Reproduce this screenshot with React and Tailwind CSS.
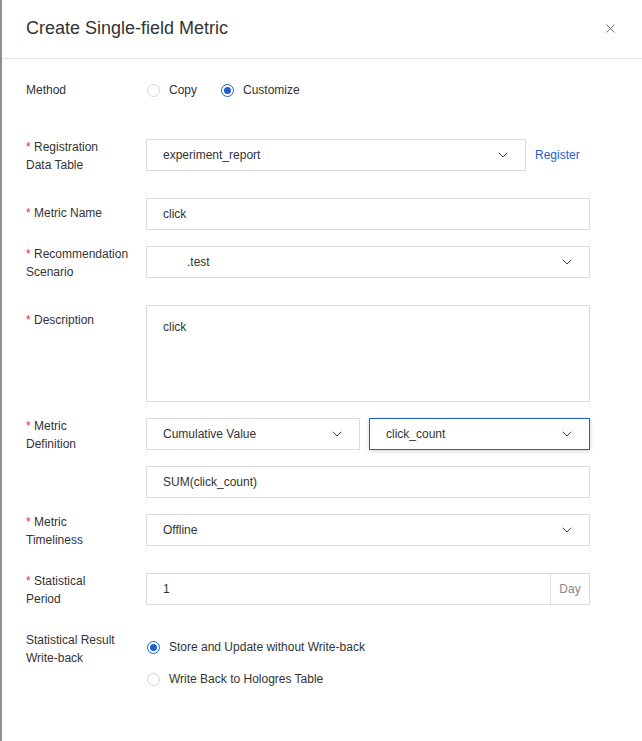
import React from 'react';
import { ChevronDown, X } from 'lucide-react';

const font = { fontFamily: '"Liberation Sans", Arial, sans-serif' };

const Label = ({ text, required, two }) => (
  <div className="w-[120px] shrink-0">
    <div className={`w-[91px] text-[12px] leading-[18px] text-[#333] pb-2 ${two ? '-mt-px' : 'pt-[6px]'}`}>
      {required && <span className="text-[#e62e2e]">*{'\u00a0'}</span>}
      {text}
    </div>
  </div>
);

const Select = ({ value, className = '', active }) => (
  <div
    className={`h-[32px] flex items-center justify-between pl-4 pr-[14px] bg-white text-[12px] text-[#333] border ${
      active ? 'border-[#1f5fd0] shadow-[0_1px_4px_rgba(0,0,0,0.18)]' : 'border-[#dcdcdc]'
    } ${className}`}
  >
    <span>{value}</span>
    <ChevronDown size={16} strokeWidth={1.4} className="text-[#333]" />
  </div>
);

const Input = ({ value, className = '' }) => (
  <div className={`h-[32px] flex items-center pl-4 bg-white text-[12px] text-[#333] border border-[#dcdcdc] ${className}`}>
    {value}
  </div>
);

const Radio = ({ checked, label }) => (
  <div className="flex items-center gap-[9px] text-[12px] text-[#333]">
    <span
      className={`w-[13px] h-[13px] rounded-full border flex items-center justify-center ${
        checked ? 'border-[#1f5fd0]' : 'border-[#d4d4d4]'
      }`}
    >
      {checked && <span className="w-[7px] h-[7px] rounded-full bg-[#1f5fd0]" />}
    </span>
    {label}
  </div>
);

const Row = ({ label, required, two, children, className = 'mb-4' }) => (
  <div className={`flex items-start ${className}`}>
    <Label text={label} required={required} two={two} />
    <div className="w-[444px]">{children}</div>
  </div>
);

export default function App() {
  return (
    <div className="w-[642px] h-[741px] bg-white flex" style={font}>
      <div className="w-[2px] bg-[#8f8f8f] shrink-0" />
      <div className="flex-1 flex flex-col">
        <div className="h-[59px] border-b border-[#e3e3e3] flex items-center justify-between pl-6 pr-6">
          <h1 className="text-[18px] text-[#333] -mt-[1px]">Create Single-field Metric</h1>
          <X size={15} strokeWidth={1.3} className="text-[#555] -mt-[2px]" />
        </div>

        <div className="pl-6 pt-[15px]">
          <div className="flex items-center h-[32px] mb-[33px]">
            <div className="w-[120px] text-[12px] text-[#333]">Method</div>
            <div className="flex items-center gap-[24px] pl-px">
              <Radio label="Copy" />
              <Radio checked label="Customize" />
            </div>
          </div>

          <Row label="Registration Data Table" required two>
            <div className="flex items-center gap-[9px]">
              <Select value="experiment_report" className="w-[380px]" />
              <span className="text-[12px] text-[#1f5fd0]">Register</span>
            </div>
          </Row>

          <Row label="Metric Name" required>
            <Input value="click" />
          </Row>

          <Row label="Recommendation Scenario" required two>
            <Select value={<span className="pl-6">.test</span>} />
          </Row>

          <Row label="Description" required>
            <div className="h-[97px] border border-[#dcdcdc] pl-4 pt-3 text-[12px] leading-[18px] text-[#333]">click</div>
          </Row>

          <Row label="Metric Definition" required two>
            <div className="flex gap-[9px] mb-4">
              <Select value="Cumulative Value" className="w-[214px]" />
              <Select value="click_count" active className="flex-1" />
            </div>
            <Input value="SUM(click_count)" />
          </Row>

          <Row label="Metric Timeliness" required two>
            <Select value="Offline" />
          </Row>

          <Row label="Statistical Period" required two>
            <div className="h-[32px] flex border border-[#dcdcdc] text-[12px]">
              <div className="flex-1 flex items-center pl-4 text-[#333]">1</div>
              <div className="w-[39px] border-l border-[#dcdcdc] flex items-center justify-center text-[#888]">Day</div>
            </div>
          </Row>

          <Row label="Statistical Result Write-back" two>
            <div className="flex flex-col gap-[14px] pt-[6px] pl-px">
              <Radio checked label="Store and Update without Write-back" />
              <Radio label="Write Back to Hologres Table" />
            </div>
          </Row>
        </div>
      </div>
    </div>
  );
}
